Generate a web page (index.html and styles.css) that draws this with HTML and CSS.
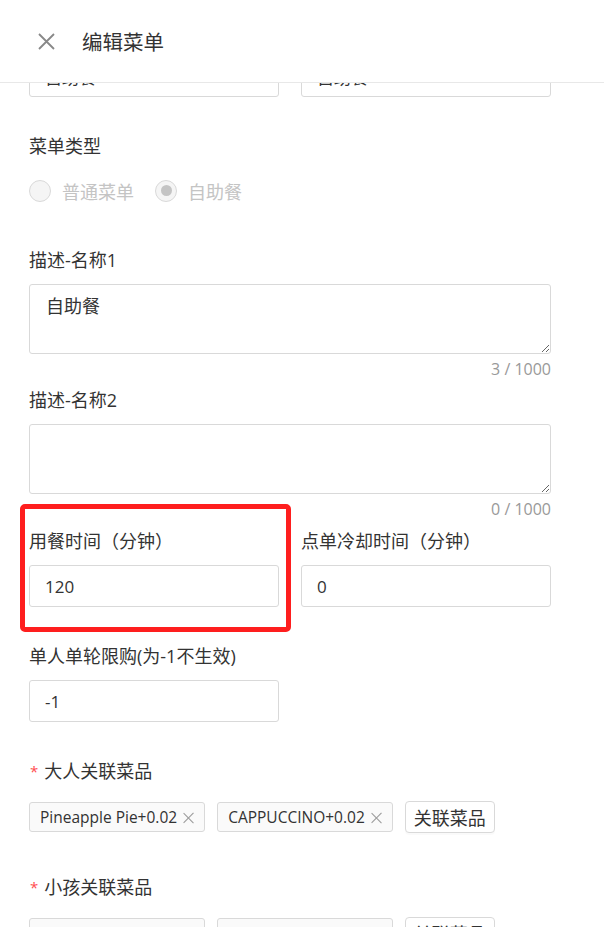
FILE: index.html
```html
<!DOCTYPE html>
<html lang="zh-CN">

<head>
    <meta charset="UTF-8">
    <meta name="viewport" content="width=device-width, initial-scale=1.0">
    <title>编辑菜单</title>
    <link rel="stylesheet" href="styles.css">
</head>

<body>
    <div class="drawer">
        <header class="drawer-header">
            <button class="close-btn" type="button" aria-label="关闭">
                <svg width="17" height="17" viewBox="0 0 17 17">
                    <path d="M1 1L16 16M16 1L1 16" stroke="#888" stroke-width="1.8" fill="none" />
                </svg>
            </button>
            <h1>编辑菜单</h1>
        </header>

        <main class="drawer-body">
            <form class="menu-form">
                <div class="form-row">
                    <div class="form-item">
                        <label>菜单名称1</label>
                        <div class="input-box">
                            <input type="text" value="自助餐">
                            <span class="suffix">3 / 10</span>
                        </div>
                    </div>
                    <div class="form-item">
                        <label>菜单名称2</label>
                        <div class="input-box">
                            <input type="text" value="自助餐">
                            <span class="suffix">3 / 10</span>
                        </div>
                    </div>
                </div>

                <div class="form-item">
                    <label>菜单类型</label>
                    <div class="radio-group">
                        <span class="radio"><span class="radio-dot"></span>普通菜单</span>
                        <span class="radio checked"><span class="radio-dot"></span>自助餐</span>
                    </div>
                </div>

                <div class="form-item with-count">
                    <label>描述-名称1</label>
                    <textarea>自助餐</textarea>
                    <div class="count">3 / 1000</div>
                </div>

                <div class="form-item with-count last-count">
                    <label>描述-名称2</label>
                    <textarea></textarea>
                    <div class="count">0 / 1000</div>
                </div>

                <div class="form-row">
                    <div class="form-item marked">
                        <label>用餐时间（分钟）</label>
                        <div class="input-box">
                            <input type="text" value="120">
                        </div>
                        <div class="highlight"></div>
                    </div>
                    <div class="form-item">
                        <label>点单冷却时间（分钟）</label>
                        <div class="input-box">
                            <input type="text" value="0">
                        </div>
                    </div>
                </div>

                <div class="form-row">
                    <div class="form-item">
                        <label>单人单轮限购(为-1不生效)</label>
                        <div class="input-box">
                            <input type="text" value="-1">
                        </div>
                    </div>
                </div>

                <div class="form-item">
                    <label class="required">大人关联菜品</label>
                    <div class="tag-row">
                        <span class="tag">Pineapple Pie+0.02<i class="tag-close"></i></span>
                        <span class="tag">CAPPUCCINO+0.02<i class="tag-close"></i></span>
                        <button class="link-btn" type="button">关联菜品</button>
                    </div>
                </div>

                <div class="form-item">
                    <label class="required">小孩关联菜品</label>
                    <div class="tag-row">
                        <span class="tag">Pineapple Pie+0.02<i class="tag-close"></i></span>
                        <span class="tag">CAPPUCCINO+0.02<i class="tag-close"></i></span>
                        <button class="link-btn" type="button">关联菜品</button>
                    </div>
                </div>
            </form>
        </main>
    </div>
</body>

</html>
```

FILE: styles.css
```css
* {
    margin: 0;
    padding: 0;
    box-sizing: border-box;
    font-family: 'Open Sans', 'Noto Sans CJK SC', sans-serif;
}

html,
body {
    height: 100%;
    overflow: hidden;
    background-color: #fff;
}

.drawer {
    display: flex;
    flex-direction: column;
    height: 100%;
}

.drawer-header {
    display: flex;
    align-items: center;
    height: 83px;
    padding-left: 38px;
    border-bottom: 1px solid #e8e8e8;
    background-color: #fff;
    position: relative;
    z-index: 2;
    flex-shrink: 0;
}

.close-btn {
    display: flex;
    background: none;
    border: none;
    margin-right: 27px;
    cursor: pointer;
}

.drawer-header h1 {
    font-size: 20.5px;
    font-weight: 400;
    color: #333;
}

.drawer-body {
    flex: 1;
    overflow: hidden;
}

/* scrolled down: first row sits under the header */
.menu-form {
    margin-top: -64px;
    padding-left: 29px;
    width: 551px;
}

.form-row {
    display: grid;
    grid-template-columns: 250px 250px;
    column-gap: 22px;
}

.form-item {
    margin-bottom: 37px;
    position: relative;
}

.form-item label {
    display: block;
    font-size: 18px;
    line-height: 24px;
    color: #333;
    margin-bottom: 12px;
}

.form-item label.required::before {
    content: '*';
    color: #ff4d4f;
    font-size: 15px;
    margin-right: 6px;
    margin-left: 1px;
    position: relative;
    top: -1px;
}

.input-box {
    display: flex;
    align-items: center;
    height: 42px;
    border: 1px solid #d9d9d9;
    border-radius: 3px;
    padding: 0 15px;
}

.input-box input {
    flex: 1;
    min-width: 0;
    border: none;
    outline: none;
    font-size: 17px;
    color: #333;
    background: transparent;
}

.input-box .suffix {
    font-size: 16px;
    color: #aaa;
}

.radio-group {
    display: flex;
    align-items: center;
    height: 41px;
    gap: 21px;
}

.radio {
    display: flex;
    align-items: center;
    font-size: 18px;
    color: #c4c4c4;
}

.radio-dot {
    width: 22px;
    height: 22px;
    border-radius: 50%;
    border: 1px solid #d9d9d9;
    background-color: #f5f5f5;
    margin-right: 11px;
    display: flex;
    align-items: center;
    justify-content: center;
}

.radio.checked .radio-dot::after {
    content: '';
    width: 11px;
    height: 11px;
    border-radius: 50%;
    background-color: #c4c4c4;
}

.form-item textarea {
    display: block;
    width: 100%;
    height: 70px;
    border: 1px solid #d9d9d9;
    border-radius: 3px;
    padding: 9px 16px;
    font-size: 18px;
    line-height: 24px;
    color: #333;
    outline: none;
    resize: vertical;
}

.form-item.with-count {
    margin-bottom: 9px;
}

.form-item.last-count {
    margin-bottom: 10px;
}

.count {
    text-align: right;
    font-size: 16px;
    line-height: 20px;
    color: #999;
    margin-top: 5px;
}

.highlight {
    position: absolute;
    top: -25px;
    left: -9px;
    right: -12px;
    bottom: -25px;
    border: 5px solid #fe1e1e;
    border-radius: 5px;
    pointer-events: none;
}

.tag-row {
    display: flex;
    align-items: center;
    height: 42px;
    gap: 12px;
}

.tag {
    display: inline-flex;
    align-items: center;
    height: 30px;
    padding: 0 10px;
    background-color: #fafafa;
    border: 1px solid #d9d9d9;
    border-radius: 3px;
    font-size: 15.5px;
    color: #333;
    white-space: nowrap;
}

.tag-close {
    display: inline-block;
    width: 11px;
    height: 11px;
    margin-left: 6px;
    position: relative;
}

.tag-close::before,
.tag-close::after {
    content: '';
    position: absolute;
    left: 5px;
    top: -1px;
    width: 1.3px;
    height: 14px;
    background-color: #999;
    transform: rotate(45deg);
}

.tag-close::after {
    transform: rotate(-45deg);
}

.link-btn {
    height: 32px;
    padding: 0 8px;
    background-color: #fff;
    border: 1px solid #d9d9d9;
    border-radius: 4px;
    box-shadow: 0 2px 0 rgba(0, 0, 0, 0.02);
    font-size: 18px;
    color: #333;
    cursor: pointer;
}
```
